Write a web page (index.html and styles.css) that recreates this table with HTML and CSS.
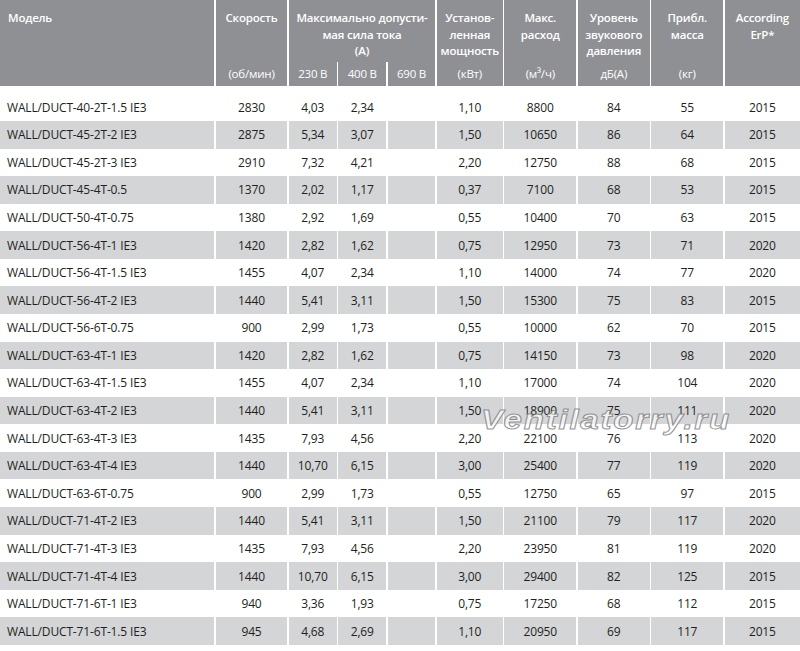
FILE: index.html
```html
<!DOCTYPE html>
<html lang="ru">
<head>
<meta charset="utf-8">
<title>WALL/DUCT</title>
<link rel="stylesheet" href="styles.css">
</head>
<body>
<div class="table">
  <div class="head">
    <div class="h h-model"><span class="t">Модель</span></div>
    <div class="h h-tall"><span class="t">Скорость</span><span class="u">(об/мин)</span></div>
    <div class="h h-span"><span class="t">Максимально допусти-<br>мая сила тока<br>(А)</span></div>
    <div class="h h-sub">230 В</div>
    <div class="h h-sub">400 В</div>
    <div class="h h-sub">690 В</div>
    <div class="h h-tall"><span class="t">Установ-<br>ленная<br>мощность</span><span class="u">(кВт)</span></div>
    <div class="h h-tall"><span class="t">Макс.<br>расход</span><span class="u">(м³/ч)</span></div>
    <div class="h h-tall"><span class="t">Уровень<br>звукового<br>давления</span><span class="u">дБ(А)</span></div>
    <div class="h h-tall"><span class="t">Прибл.<br>масса</span><span class="u">(кг)</span></div>
    <div class="h h-tall"><span class="t">According<br>ErP*</span><span class="u"></span></div>
  </div>
  <div class="spacer"></div>
  <div class="row"><div class="c m">WALL/DUCT-40-2T-1.5 IE3</div><div class="c">2830</div><div class="c">4,03</div><div class="c">2,34</div><div class="c"></div><div class="c">1,10</div><div class="c">8800</div><div class="c">84</div><div class="c">55</div><div class="c">2015</div></div>
  <div class="row alt"><div class="c m">WALL/DUCT-45-2T-2 IE3</div><div class="c">2875</div><div class="c">5,34</div><div class="c">3,07</div><div class="c"></div><div class="c">1,50</div><div class="c">10650</div><div class="c">86</div><div class="c">64</div><div class="c">2015</div></div>
  <div class="row"><div class="c m">WALL/DUCT-45-2T-3 IE3</div><div class="c">2910</div><div class="c">7,32</div><div class="c">4,21</div><div class="c"></div><div class="c">2,20</div><div class="c">12750</div><div class="c">88</div><div class="c">68</div><div class="c">2015</div></div>
  <div class="row alt"><div class="c m">WALL/DUCT-45-4T-0.5</div><div class="c">1370</div><div class="c">2,02</div><div class="c">1,17</div><div class="c"></div><div class="c">0,37</div><div class="c">7100</div><div class="c">68</div><div class="c">53</div><div class="c">2015</div></div>
  <div class="row"><div class="c m">WALL/DUCT-50-4T-0.75</div><div class="c">1380</div><div class="c">2,92</div><div class="c">1,69</div><div class="c"></div><div class="c">0,55</div><div class="c">10400</div><div class="c">70</div><div class="c">63</div><div class="c">2015</div></div>
  <div class="row alt"><div class="c m">WALL/DUCT-56-4T-1 IE3</div><div class="c">1420</div><div class="c">2,82</div><div class="c">1,62</div><div class="c"></div><div class="c">0,75</div><div class="c">12950</div><div class="c">73</div><div class="c">71</div><div class="c">2020</div></div>
  <div class="row"><div class="c m">WALL/DUCT-56-4T-1.5 IE3</div><div class="c">1455</div><div class="c">4,07</div><div class="c">2,34</div><div class="c"></div><div class="c">1,10</div><div class="c">14000</div><div class="c">74</div><div class="c">77</div><div class="c">2020</div></div>
  <div class="row alt"><div class="c m">WALL/DUCT-56-4T-2 IE3</div><div class="c">1440</div><div class="c">5,41</div><div class="c">3,11</div><div class="c"></div><div class="c">1,50</div><div class="c">15300</div><div class="c">75</div><div class="c">83</div><div class="c">2015</div></div>
  <div class="row"><div class="c m">WALL/DUCT-56-6T-0.75</div><div class="c">900</div><div class="c">2,99</div><div class="c">1,73</div><div class="c"></div><div class="c">0,55</div><div class="c">10000</div><div class="c">62</div><div class="c">70</div><div class="c">2015</div></div>
  <div class="row alt"><div class="c m">WALL/DUCT-63-4T-1 IE3</div><div class="c">1420</div><div class="c">2,82</div><div class="c">1,62</div><div class="c"></div><div class="c">0,75</div><div class="c">14150</div><div class="c">73</div><div class="c">98</div><div class="c">2020</div></div>
  <div class="row"><div class="c m">WALL/DUCT-63-4T-1.5 IE3</div><div class="c">1455</div><div class="c">4,07</div><div class="c">2,34</div><div class="c"></div><div class="c">1,10</div><div class="c">17000</div><div class="c">74</div><div class="c">104</div><div class="c">2020</div></div>
  <div class="row alt"><div class="c m">WALL/DUCT-63-4T-2 IE3</div><div class="c">1440</div><div class="c">5,41</div><div class="c">3,11</div><div class="c"></div><div class="c">1,50</div><div class="c">18900</div><div class="c">75</div><div class="c">111</div><div class="c">2020</div></div>
  <div class="row"><div class="c m">WALL/DUCT-63-4T-3 IE3</div><div class="c">1435</div><div class="c">7,93</div><div class="c">4,56</div><div class="c"></div><div class="c">2,20</div><div class="c">22100</div><div class="c">76</div><div class="c">113</div><div class="c">2020</div></div>
  <div class="row alt"><div class="c m">WALL/DUCT-63-4T-4 IE3</div><div class="c">1440</div><div class="c">10,70</div><div class="c">6,15</div><div class="c"></div><div class="c">3,00</div><div class="c">25400</div><div class="c">77</div><div class="c">119</div><div class="c">2020</div></div>
  <div class="row"><div class="c m">WALL/DUCT-63-6T-0.75</div><div class="c">900</div><div class="c">2,99</div><div class="c">1,73</div><div class="c"></div><div class="c">0,55</div><div class="c">12750</div><div class="c">65</div><div class="c">97</div><div class="c">2015</div></div>
  <div class="row alt"><div class="c m">WALL/DUCT-71-4T-2 IE3</div><div class="c">1440</div><div class="c">5,41</div><div class="c">3,11</div><div class="c"></div><div class="c">1,50</div><div class="c">21100</div><div class="c">79</div><div class="c">117</div><div class="c">2020</div></div>
  <div class="row"><div class="c m">WALL/DUCT-71-4T-3 IE3</div><div class="c">1435</div><div class="c">7,93</div><div class="c">4,56</div><div class="c"></div><div class="c">2,20</div><div class="c">23950</div><div class="c">81</div><div class="c">119</div><div class="c">2020</div></div>
  <div class="row alt"><div class="c m">WALL/DUCT-71-4T-4 IE3</div><div class="c">1440</div><div class="c">10,70</div><div class="c">6,15</div><div class="c"></div><div class="c">3,00</div><div class="c">29400</div><div class="c">82</div><div class="c">125</div><div class="c">2015</div></div>
  <div class="row"><div class="c m">WALL/DUCT-71-6T-1 IE3</div><div class="c">940</div><div class="c">3,36</div><div class="c">1,93</div><div class="c"></div><div class="c">0,75</div><div class="c">17250</div><div class="c">68</div><div class="c">112</div><div class="c">2015</div></div>
  <div class="row alt"><div class="c m">WALL/DUCT-71-6T-1.5 IE3</div><div class="c">945</div><div class="c">4,68</div><div class="c">2,69</div><div class="c"></div><div class="c">1,10</div><div class="c">20950</div><div class="c">69</div><div class="c">117</div><div class="c">2015</div></div>
  <div class="watermark">Ventilatorry.ru</div>
</div>
</body>
</html>
```
FILE: styles.css
```css
html, body {
  margin: 0;
  padding: 0;
  background: #ffffff;
}
body {
  width: 800px;
  height: 651px;
  overflow: hidden;
  font-family: "Open Sans", "Liberation Sans", sans-serif;
  color: #231f20;
}
.table {
  position: relative;
  width: 800px;
}
.head,
.row {
  display: grid;
  grid-template-columns: 214.25px 71.5px 48px 48px 47.5px 66px 72px 72px 72px 75.25px;
  column-gap: 1.5px;
}
.head {
  grid-template-rows: 62px 24px;
  font-size: 11.5px;
  font-weight: 600;
  color: #ffffff;
  letter-spacing: -0.2px;
}
.h {
  background: #8e9094;
  text-align: center;
}
.h-model,
.h-tall {
  grid-row: 1 / 3;
  display: flex;
  flex-direction: column;
  justify-content: space-between;
}
.h-model {
  text-align: left;
  padding-left: 8px;
}
.h-span {
  grid-column: 3 / 6;
  grid-row: 1;
}
.h-sub {
  grid-row: 2;
  line-height: 24px;
  font-weight: 400;
}
.t {
  display: block;
  padding-top: 10px;
  line-height: 16.5px;
}
.u {
  display: block;
  height: 24px;
  line-height: 24px;
  font-weight: 400;
}
.h-sub, .u {
  font-size: 11.5px;
}
.spacer {
  height: 7.4px;
}
.row {
  height: 27.58px;
  font-size: 12px;
  letter-spacing: -0.15px;
}
.c {
  display: flex;
  align-items: center;
  justify-content: center;
  white-space: nowrap;
}
.c.m {
  justify-content: flex-start;
  padding-left: 7px;
}
.row.alt .c {
  background: #d4d5d7;
}
.watermark {
  position: absolute;
  left: 481px;
  top: 405px;
  font-family: "Liberation Sans", sans-serif;
  font-style: italic;
  font-weight: 700;
  font-size: 28px;
  line-height: 30px;
  letter-spacing: 1.5px;
  transform: scaleX(1.18);
  transform-origin: left top;
  color: rgba(255, 255, 255, 0.7);
  -webkit-text-stroke: 1px rgba(130, 130, 130, 0.85);
  pointer-events: none;
}
```
